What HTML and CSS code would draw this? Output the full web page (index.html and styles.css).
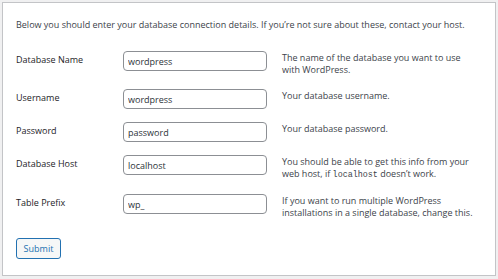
FILE: index.html
```html
<!DOCTYPE html>
<html lang="en">
  <head>
    <meta charset="UTF-8" />
    <meta name="viewport" content="width=device-width, initial-scale=1.0" />
    <title>Database Setup</title>
    <link rel="stylesheet" href="styles.css">
  </head>
  <body>
    <form class="setup">
      <p class="setup__intro">Below you should enter your database connection details. If you’re not sure about these, contact your host.</p>

      <div class="setup__table">
        <label class="setup__label" for="dbname">Database Name</label>
        <input class="setup__input" id="dbname" type="text" value="wordpress" />
        <div class="setup__desc">The name of the database you want to use with WordPress.</div>

        <label class="setup__label" for="uname">Username</label>
        <input class="setup__input" id="uname" type="text" value="wordpress" />
        <div class="setup__desc">Your database username.</div>

        <label class="setup__label" for="pwd">Password</label>
        <input class="setup__input" id="pwd" type="text" value="password" />
        <div class="setup__desc">Your database password.</div>

        <label class="setup__label" for="dbhost">Database Host</label>
        <input class="setup__input" id="dbhost" type="text" value="localhost" />
        <div class="setup__desc">You should be able to get this info from your web host, if <code>localhost</code> doesn’t work.</div>

        <label class="setup__label" for="prefix">Table Prefix</label>
        <input class="setup__input" id="prefix" type="text" value="wp_" />
        <div class="setup__desc">If you want to run multiple WordPress installations in a single database, change this.</div>
      </div>

      <button class="button--submit" type="button">Submit</button>
    </form>
  </body>
</html>
```

FILE: styles.css
```css
* {
  box-sizing: border-box;
  margin: 0;
  padding: 0;
}
html,
body {
  width: 100%;
  height: 100%;
}
body {
  background-color: #f0f0f1;
  padding: 2px;
  font-family: "Open Sans", "Noto Sans", sans-serif;
  font-size: 9px;
  line-height: 12px;
  color: #3c434a;
}
.setup {
  width: 494px;
  height: 274px;
  background-color: #fff;
  border: 1px solid #c3c4c7;
  padding: 16px 13px 0 13px;
}
.setup__intro {
  margin-bottom: 20px;
}
.setup__table {
  display: grid;
  grid-template-columns: 92px 144px 1fr;
  column-gap: 15px;
  row-gap: 13px;
  align-items: start;
}
.setup__label {
  padding-top: 3px;
  color: #1d2327;
}
.setup__input {
  height: 20px;
  width: 144px;
  border: 1px solid #8c8f94;
  border-radius: 4px;
  padding: 0 4px;
  font-family: inherit;
  font-size: 9px;
  color: #2c3338;
  background-color: #fff;
}
.setup__input:focus {
  outline: none;
  border-color: #2271b1;
}
.setup__desc {
  max-width: 194px;
  padding-top: 1px;
}
.setup__desc code {
  font-family: "Liberation Mono", "DejaVu Sans Mono", monospace;
  font-size: 8.4px;
}
.button--submit {
  display: block;
  margin-top: 19px;
  height: 21px;
  width: 45px;
  border: 1px solid #2271b1;
  border-radius: 3px;
  background-color: #f6f7f7;
  color: #2271b1;
  font-family: inherit;
  font-size: 9px;
  cursor: pointer;
}
.button--submit:hover {
  background-color: #f0f0f1;
}
```
